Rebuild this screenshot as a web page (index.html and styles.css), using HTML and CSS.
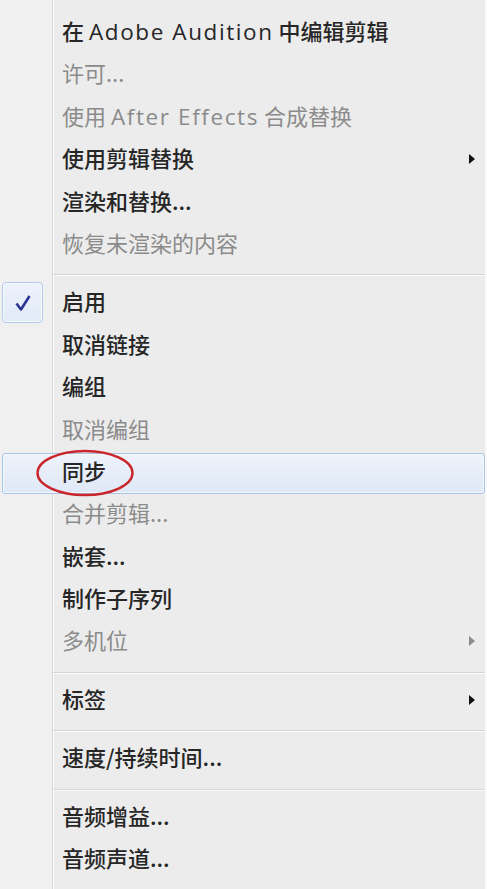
FILE: index.html
```html
<!DOCTYPE html>
<html lang="zh-CN">

<head>
    <meta charset="UTF-8">
    <title>剪辑菜单</title>
    <link rel="stylesheet" href="styles.css">
</head>

<body>

    <div class="menu">
        <div class="item">在 <span class="en">Adobe Audition</span> 中编辑剪辑</div>
        <div class="item off">许可...</div>
        <div class="item off">使用 <span class="en">After Effects</span> 合成替换</div>
        <div class="item sub">使用剪辑替换</div>
        <div class="item">渲染和替换...</div>
        <div class="item off">恢复未渲染的内容</div>

        <div class="sep"></div>

        <div class="item checked">
            <span class="check">
                <svg width="16" height="18" viewBox="0 0 16 18">
                    <path d="M1.5 9.5 L6 15.5 L14.5 2" fill="none" stroke="#2b3592" stroke-width="2.6" stroke-linejoin="round"/>
                </svg>
            </span>
            启用
        </div>
        <div class="item">取消链接</div>
        <div class="item">编组</div>
        <div class="item off">取消编组</div>
        <div class="item hover">
            同步
            <!-- red circle drawn over the item -->
            <svg class="mark" width="100" height="50" viewBox="0 0 100 50">
                <ellipse cx="50" cy="25" rx="47.5" ry="22" fill="none" stroke="#c9252b" stroke-width="2.4"/>
            </svg>
        </div>
        <div class="item off">合并剪辑...</div>
        <div class="item">嵌套...</div>
        <div class="item">制作子序列</div>
        <div class="item off sub">多机位</div>

        <div class="sep"></div>

        <div class="item sub">标签</div>

        <div class="sep"></div>

        <div class="item">速度/持续时间...</div>

        <div class="sep"></div>

        <div class="item">音频增益...</div>
        <div class="item">音频声道...</div>
    </div>

</body>

</html>
```

FILE: styles.css
```css
body {
    margin: 0;
    padding: 0;
    background-color: #f9f9f9;
    font-family: "Noto Sans CJK SC", "Noto Sans", sans-serif;
}

.menu {
    width: 485px;
    height: 889px;
    box-sizing: border-box;
    padding-top: 11px;
    background-color: #ececec;
    /* icon gutter with its light rule */
    background-image: linear-gradient(to right, #f0f0f0 0, #f0f0f0 52px, #d9d9d9 52px, #d9d9d9 53px, #fbfbfb 53px, #fbfbfb 54px, transparent 54px);
    overflow: hidden;
}

.item {
    position: relative;
    height: 42.4px;
    line-height: 39px;
    padding-left: 62px;
    font-size: 22px;
    font-weight: 500;
    color: #262626;
    white-space: nowrap;
}

.item.off {
    color: #8b8b8b;
    font-weight: 400;
}

.en {
    font-family: "Open Sans", "Noto Sans", sans-serif;
    font-size: 22.5px;
    letter-spacing: 1.6px;
}

.item.sub::after {
    content: "";
    position: absolute;
    right: 10px;
    top: 16px;
    border-top: 5.5px solid transparent;
    border-bottom: 5.5px solid transparent;
    border-left: 6px solid #111;
}

.item.off.sub::after {
    border-left-color: #8b8b8b;
}

.sep {
    height: 16px;
    box-sizing: border-box;
    margin-left: 53px;
    padding-top: 9px;
}

.sep::before {
    content: "";
    display: block;
    height: 1px;
    background-color: #d7d7d7;
    border-bottom: 1px solid #fbfbfb;
}

.check {
    position: absolute;
    left: 2px;
    top: 1px;
    width: 41px;
    height: 41px;
    box-sizing: border-box;
    border: 1px solid #b3cbec;
    border-radius: 4px;
    background: linear-gradient(#edf2fb, #e2eaf8);
    box-shadow: inset 0 0 0 1px #f6f9fe;
    display: flex;
    align-items: center;
    justify-content: center;
}

.item.hover::before {
    content: "";
    position: absolute;
    left: 2px;
    right: 0;
    top: 2px;
    bottom: -1px;
    border: 1px solid #a9c5e8;
    border-radius: 3px;
    background: linear-gradient(#eef3fb, #dfe8f6);
    box-shadow: inset 0 0 0 1px #f4f7fd;
    z-index: -1;
}

.item.hover {
    z-index: 0;
}

.mark {
    position: absolute;
    left: 35px;
    top: -3px;
}
```
